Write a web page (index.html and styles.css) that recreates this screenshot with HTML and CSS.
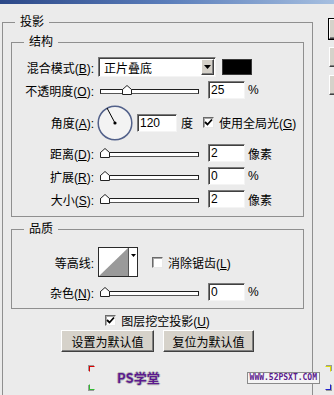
FILE: index.html
```html
<!DOCTYPE html>
<html>
<head>
    <title>投影</title>
    <link rel="stylesheet" href="styles.css">
</head>
<body>
    <div class="titlebar"></div>
    <div class="dialog">
        <fieldset class="group outer">
            <legend>投影</legend>

            <fieldset class="group">
                <legend>结构</legend>
                <div class="row r-blend">
                    <label class="name">混合模式(<u>B</u>):</label>
                    <div class="select">
                        <span class="value">正片叠底</span>
                        <span class="drop"><svg width="7" height="4" viewBox="0 0 7 4"><path d="M0 0H7L3.5 4Z" fill="#000"/></svg></span>
                    </div>
                    <div class="swatch"></div>
                </div>
                <div class="row r-field">
                    <label class="name">不透明度(<u>O</u>):</label>
                    <div class="slider">
                        <div class="track"></div>
                        <svg class="thumb" style="left: 22px" width="10" height="10" viewBox="0 0 10 10"><path d="M0.5 9.5V4.5L5 0.5L9.5 4.5V9.5Z" fill="#fff" stroke="#222"/></svg>
                    </div>
                    <input class="num" type="text" value="25">
                    <span class="unit">%</span>
                </div>
                <div class="row r-angle">
                    <label class="name">角度(<u>A</u>):</label>
                    <svg class="dial" width="36" height="36" viewBox="0 0 36 36">
                        <circle cx="18" cy="18" r="16.8" fill="#f3f3f3" stroke="#52618a" stroke-width="1.5"/>
                        <line x1="18" y1="18" x2="10" y2="3" stroke="#000" stroke-width="1"/>
                        <circle cx="18" cy="18" r="1.6" fill="#000"/>
                    </svg>
                    <input class="num wide" type="text" value="120">
                    <span class="unit">度</span>
                    <span class="check on"><svg width="9" height="9" viewBox="0 0 9 9"><path d="M1 4L3.5 6.5L8 1.5" fill="none" stroke="#000" stroke-width="1.8"/></svg></span>
                    <span class="check-label">使用全局光(<u>G</u>)</span>
                </div>
                <div class="row r-field">
                    <label class="name">距离(<u>D</u>):</label>
                    <div class="slider">
                        <div class="track"></div>
                        <svg class="thumb" style="left: 0px" width="10" height="10" viewBox="0 0 10 10"><path d="M0.5 9.5V4.5L5 0.5L9.5 4.5V9.5Z" fill="#fff" stroke="#222"/></svg>
                    </div>
                    <input class="num" type="text" value="2">
                    <span class="unit">像素</span>
                </div>
                <div class="row r-field">
                    <label class="name">扩展(<u>R</u>):</label>
                    <div class="slider">
                        <div class="track"></div>
                        <svg class="thumb" style="left: 0px" width="10" height="10" viewBox="0 0 10 10"><path d="M0.5 9.5V4.5L5 0.5L9.5 4.5V9.5Z" fill="#fff" stroke="#222"/></svg>
                    </div>
                    <input class="num" type="text" value="0">
                    <span class="unit">%</span>
                </div>
                <div class="row r-field">
                    <label class="name">大小(<u>S</u>):</label>
                    <div class="slider">
                        <div class="track"></div>
                        <svg class="thumb" style="left: 0px" width="10" height="10" viewBox="0 0 10 10"><path d="M0.5 9.5V4.5L5 0.5L9.5 4.5V9.5Z" fill="#fff" stroke="#222"/></svg>
                    </div>
                    <input class="num" type="text" value="2">
                    <span class="unit">像素</span>
                </div>
            </fieldset>

            <fieldset class="group quality">
                <legend>品质</legend>
                <div class="row r-contour">
                    <label class="name">等高线:</label>
                    <div class="contour">
                        <svg class="curve" width="29" height="28" viewBox="0 0 29 28"><path d="M0 28L29 0V28Z" fill="#9a9a9a"/></svg>
                        <span class="drop-mini"><svg width="5" height="3" viewBox="0 0 5 3"><path d="M0 0H5L2.5 3Z" fill="#000"/></svg></span>
                    </div>
                    <span class="check"></span>
                    <span class="check-label">消除锯齿(<u>L</u>)</span>
                </div>
                <div class="row r-field r-noise">
                    <label class="name">杂色(<u>N</u>):</label>
                    <div class="slider">
                        <div class="track"></div>
                        <svg class="thumb" style="left: 0px" width="10" height="10" viewBox="0 0 10 10"><path d="M0.5 9.5V4.5L5 0.5L9.5 4.5V9.5Z" fill="#fff" stroke="#222"/></svg>
                    </div>
                    <input class="num" type="text" value="0">
                    <span class="unit">%</span>
                </div>
            </fieldset>

            <div class="knockout">
                <span class="check on"><svg width="9" height="9" viewBox="0 0 9 9"><path d="M1 4L3.5 6.5L8 1.5" fill="none" stroke="#000" stroke-width="1.8"/></svg></span>
                <span class="check-label">图层挖空投影(<u>U</u>)</span>
            </div>
            <div class="buttons">
                <button class="btn b-set">设置为默认值</button>
                <button class="btn b-reset">复位为默认值</button>
            </div>
        </fieldset>

        <div class="side">
            <button class="btn side-btn default"></button>
            <button class="btn side-btn"></button>
            <button class="btn side-btn"></button>
        </div>
    </div>

    <div class="watermark">
        <span class="corner c-tl"></span>
        <span class="corner c-bl"></span>
        <span class="corner c-tr"></span>
        <span class="corner c-br"></span>
        <span class="wm-logo">PS学堂</span>
        <span class="wm-url">WWW.52PSXT.COM</span>
    </div>
</body>
</html>
```

FILE: styles.css
```css
body {
    margin: 0;
    width: 334px;
    height: 395px;
    overflow: hidden;
    position: relative;
    background: #ebebeb;
    font-family: "Liberation Sans", "Noto Sans CJK SC", sans-serif;
    font-size: 12px;
    color: #000;
}
u {
    text-decoration: underline;
    text-underline-offset: 1px;
}
.titlebar {
    height: 4px;
    background: linear-gradient(to right, #2c4888, #5a7dba 50%, #a6bfe0);
}
.dialog {
    display: flex;
    align-items: flex-start;
}

/* group boxes */
fieldset.group {
    margin: 0;
    min-width: 0;
    border: 1px solid #8f8f8f;
    padding: 8px 8px 8px 8px;
}
fieldset.group legend {
    margin-left: 4px;
    padding: 0 5px;
    line-height: 14px;
}
fieldset.outer {
    box-sizing: border-box;
    width: 311px;
    margin: 11px 0 0 2px;
    padding: 6px 8px 60px 8px;
    flex-shrink: 0;
}
fieldset.quality {
    margin-top: 5px;
    padding-top: 11px;
    padding-bottom: 7px;
}

/* rows */
.row {
    display: flex;
    align-items: center;
}
.name {
    width: 74px;
    text-align: right;
    white-space: nowrap;
    flex-shrink: 0;
}
.r-blend {
    height: 20px;
}
.r-field {
    height: 18px;
    margin-top: 5px;
}
.r-blend + .r-field {
    margin-top: 4px;
}
.r-angle {
    height: 37px;
    margin-top: 5px;
}
.r-angle + .r-field {
    margin-top: 3px;
}
.r-contour {
    height: 30px;
}
.r-noise {
    margin-top: 6px;
}

/* blend select */
.select {
    box-sizing: border-box;
    width: 118px;
    height: 20px;
    margin-left: 4px;
    display: flex;
    align-items: center;
    background: #fff;
    border: 1px solid;
    border-color: #7a7a7a #f4f4f4 #f4f4f4 #7a7a7a;
    box-shadow: inset 1px 1px 0 #404040;
}
.select .value {
    flex: 1;
    padding-left: 5px;
}
.drop {
    box-sizing: border-box;
    width: 13px;
    height: 16px;
    margin-right: 1px;
    display: flex;
    align-items: center;
    justify-content: center;
    background: #d4d0c8;
    border: 1px solid;
    border-color: #fff #404040 #404040 #fff;
    box-shadow: inset -1px -1px 0 #808080;
}
.swatch {
    box-sizing: border-box;
    width: 30px;
    height: 16px;
    margin-left: 6px;
    background: #000;
    border: 1px solid #3a3a3a;
}

/* sliders */
.slider {
    position: relative;
    width: 99px;
    height: 18px;
    margin-left: 6px;
    margin-right: 9px;
    flex-shrink: 0;
}
.track {
    position: absolute;
    left: 0;
    right: 0;
    top: 8px;
    height: 3px;
    background: #fff;
    border: 1px solid #1e1e1e;
    border-bottom-color: #555;
}
.thumb {
    position: absolute;
    top: 4px;
}

/* text fields */
.num {
    box-sizing: border-box;
    width: 37px;
    height: 18px;
    margin: 0;
    padding: 0 0 0 2px;
    font: inherit;
    background: #fff;
    border: 1px solid;
    border-color: #7a7a7a #f4f4f4 #f4f4f4 #7a7a7a;
    box-shadow: inset 1px 1px 0 #404040;
    outline: none;
}
.num.wide {
    width: 40px;
}
.unit {
    margin-left: 3px;
}

/* angle */
.dial {
    margin-left: 3px;
    margin-right: 4px;
    flex-shrink: 0;
}
.r-angle .unit {
    margin-left: 4px;
}
.r-angle .check {
    margin-left: 10px;
}

/* checkboxes */
.check {
    box-sizing: border-box;
    width: 11px;
    height: 11px;
    display: inline-flex;
    align-items: center;
    justify-content: center;
    background: #fff;
    border: 1px solid;
    border-color: #6a6a6a #e8e8e8 #e8e8e8 #6a6a6a;
    box-shadow: inset 1px 1px 0 #a8a8a8;
    flex-shrink: 0;
}
.check-label {
    margin-left: 5px;
    white-space: nowrap;
}

/* contour */
.contour {
    box-sizing: border-box;
    width: 40px;
    height: 30px;
    margin-left: 4px;
    display: flex;
    background: #fff;
    border: 1px solid #2a2a2a;
}
.curve {
    display: block;
    border-right: 1px solid #555;
}
.drop-mini {
    flex: 1;
    display: flex;
    justify-content: center;
    padding-top: 6px;
}
.r-contour .check {
    margin-left: 14px;
}

/* bottom of the dialog */
.knockout {
    height: 14px;
    margin-top: 4px;
    display: flex;
    align-items: center;
    justify-content: center;
}
.buttons {
    margin-top: 3px;
    display: flex;
    justify-content: center;
    gap: 9px;
}
.btn {
    box-sizing: border-box;
    height: 22px;
    padding: 0;
    font: inherit;
    color: #000;
    background: #d6d2ca;
    border: 1px solid;
    border-color: #fff #404040 #404040 #fff;
    box-shadow: inset -1px -1px 0 #808080;
}
.b-set {
    width: 93px;
}
.b-reset {
    width: 91px;
}

/* right hand buttons, mostly cut off */
.side {
    margin-left: 16px;
    margin-top: 15px;
    display: flex;
    flex-direction: column;
    gap: 8px;
    flex-shrink: 0;
}
.side-btn {
    width: 75px;
    height: 20px;
}
.side-btn.default {
    outline: 1px solid #000;
}

/* watermark */
.watermark {
    position: absolute;
    left: 89px;
    top: 366px;
    width: 242px;
    height: 24px;
    display: flex;
    align-items: center;
    white-space: nowrap;
}
.corner {
    position: absolute;
    width: 4px;
    height: 4px;
    border: 1px solid #888;
}
.c-tl {
    left: 0;
    top: 0;
    border-color: #d00 transparent transparent #d00;
    box-shadow: -1px -1px 0 #999;
}
.c-bl {
    left: 0;
    bottom: 0;
    border-color: transparent transparent #3b3 #3b3;
    box-shadow: -1px 1px 0 #999;
}
.c-tr {
    right: 0;
    top: 0;
    border-color: #dd0 #dd0 transparent transparent;
    box-shadow: 1px -1px 0 #999;
}
.c-br {
    right: 0;
    bottom: 0;
    border-color: transparent #22c #22c transparent;
    box-shadow: 1px 1px 0 #999;
}
.wm-logo {
    margin-left: 28px;
    flex-shrink: 0;
    font-family: "Noto Sans CJK SC", sans-serif;
    font-size: 13px;
    font-weight: bold;
    line-height: 16px;
    color: #5b1a8e;
    text-shadow: 1px 0 #bbb, -1px 0 #bbb, 0 1px #bbb, 0 -1px #bbb;
}
.wm-url {
    margin-left: auto;
    margin-right: 11px;
    flex-shrink: 0;
    padding: 0 2px;
    font-family: "DejaVu Sans Mono", monospace;
    font-size: 8px;
    font-weight: bold;
    line-height: 10px;
    color: #5b1a8e;
    background: #f4f4f4;
    border: 1px solid #8a8a8a;
}
```
